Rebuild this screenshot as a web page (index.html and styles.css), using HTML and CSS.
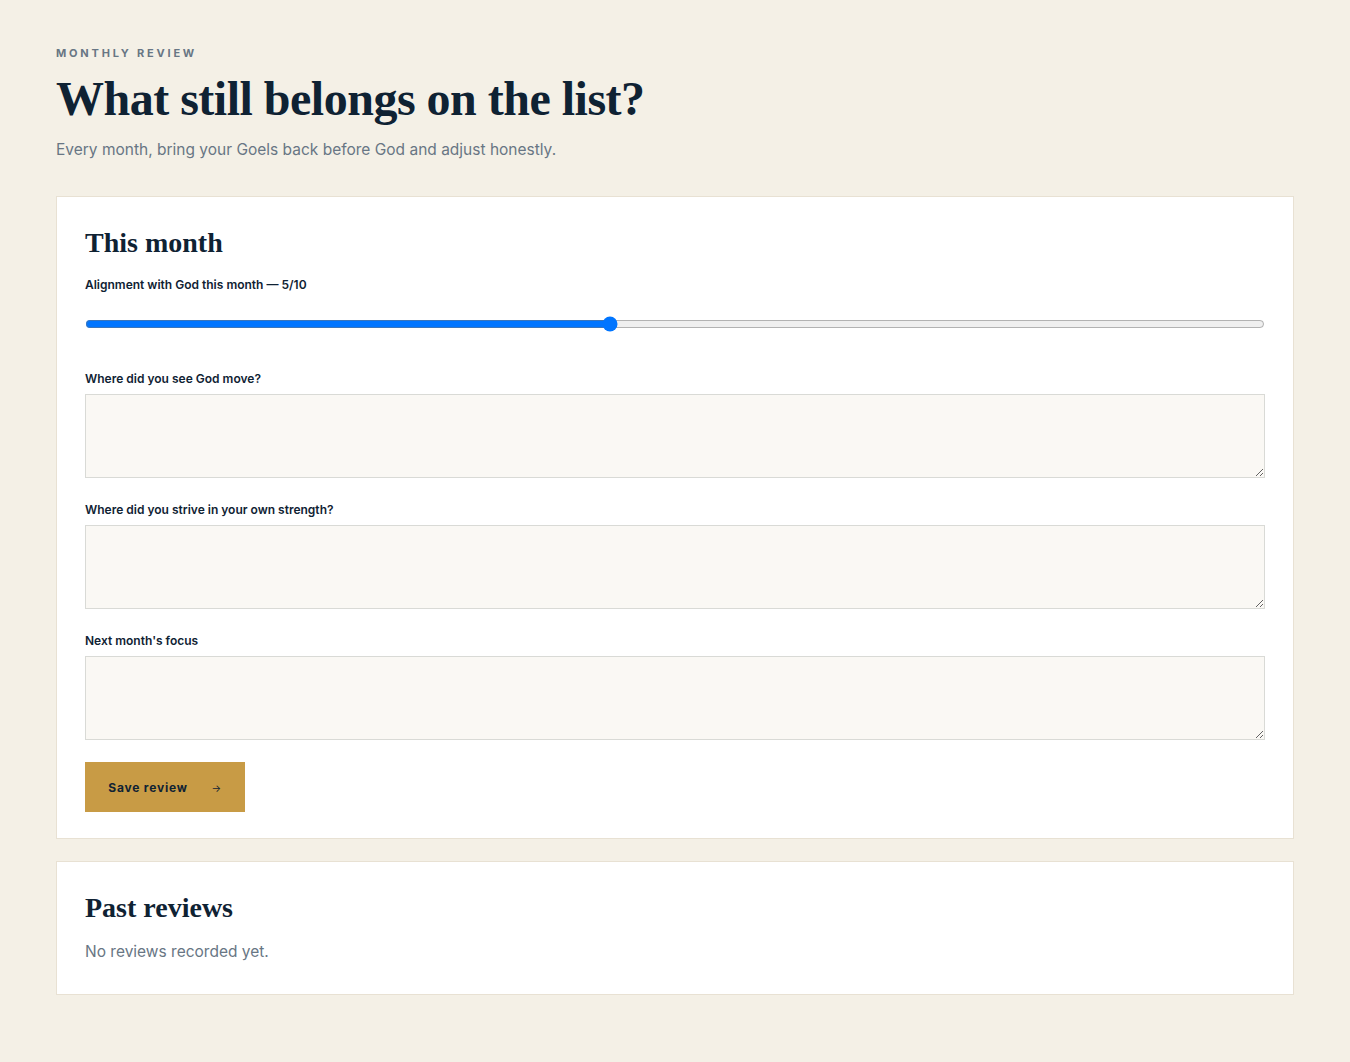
FILE: index.html
```html
<!DOCTYPE html>
<html lang="en">

<head>
    <meta charset="UTF-8">
    <meta name="viewport" content="width=device-width, initial-scale=1.0">
    <title>Monthly Review</title>
    <link rel="stylesheet" href="styles.css">
</head>

<body>
    <main class="page">
        <header class="page-head">
            <p class="eyebrow">Monthly review</p>
            <h1>What still belongs on the list?</h1>
            <p class="lede">Every month, bring your Goels back before God and adjust honestly.</p>
        </header>

        <section class="card">
            <h2>This month</h2>
            <form class="review-form" id="reviewForm">
                <div class="field">
                    <label for="alignment" id="alignmentLabel">Alignment with God this month — 5/10</label>
                    <input type="range" id="alignment" name="alignment" min="1" max="10" value="5" class="slider">
                </div>

                <div class="field">
                    <label for="godMove">Where did you see God move?</label>
                    <textarea id="godMove" name="godMove"></textarea>
                </div>

                <div class="field">
                    <label for="ownStrength">Where did you strive in your own strength?</label>
                    <textarea id="ownStrength" name="ownStrength"></textarea>
                </div>

                <div class="field">
                    <label for="nextFocus">Next month's focus</label>
                    <textarea id="nextFocus" name="nextFocus"></textarea>
                </div>

                <div>
                    <button type="submit" class="save-btn">Save review <span class="arrow">→</span></button>
                </div>
            </form>
        </section>

        <section class="card card-past">
            <h2>Past reviews</h2>
            <p class="empty">No reviews recorded yet.</p>
        </section>
    </main>

    <script>
        const slider = document.getElementById('alignment');
        slider.addEventListener('input', () => {
            document.getElementById('alignmentLabel').textContent = `Alignment with God this month — ${slider.value}/10`;
        });
        document.getElementById('reviewForm').addEventListener('submit', (e) => {
            e.preventDefault();
        });
    </script>
</body>

</html>
```

FILE: styles.css
```css
body {
    font-family: "Inter", "Open Sans", sans-serif;
    margin: 0;
    padding: 0;
    background-color: #f4f0e6;
    color: #0f2233;
}

.page {
    padding: 45px 56px 40px;
}

.page-head {
    margin-bottom: 34px;
}

.eyebrow {
    margin: 0;
    font-size: 11px;
    font-weight: 700;
    letter-spacing: 2.8px;
    text-transform: uppercase;
    color: #687684;
    line-height: 16px;
}

h1 {
    font-family: "Liberation Serif", "DejaVu Serif", serif;
    font-size: 48px;
    font-weight: 700;
    line-height: 56px;
    margin: 10px 0 11px;
    color: #0f2233;
    letter-spacing: -0.5px;
}

.lede {
    margin: 0;
    font-size: 15.5px;
    color: #687684;
    line-height: 24px;
}

.card {
    background-color: #fff;
    border: 1px solid #e8e1d3;
    padding: 28px 28px 26px;
    margin-bottom: 22px;
}

.card-past {
    padding-bottom: 33px;
}

h2 {
    font-family: "Liberation Serif", "DejaVu Serif", serif;
    font-size: 28px;
    font-weight: 700;
    line-height: 36px;
    margin: 0 0 16px;
    color: #0f2233;
}

.review-form {
    display: flex;
    flex-direction: column;
    gap: 24px;
}

.field {
    display: flex;
    flex-direction: column;
    gap: 7px;
}

.field label {
    font-size: 12px;
    font-weight: 600;
    line-height: 16px;
}

.slider {
    width: 100%;
    margin: 16px 0 15px;
}

textarea {
    height: 84px;
    box-sizing: border-box;
    background-color: #faf8f4;
    border: 1px solid #d9dad6;
    padding: 10px;
    font-family: inherit;
    font-size: 14px;
}

.save-btn {
    background-color: #c89b45;
    color: #0f2233;
    border: none;
    width: 160px;
    height: 50px;
    margin-top: -2px;
    font-family: inherit;
    font-size: 12px;
    font-weight: 700;
    letter-spacing: 0.8px;
    cursor: pointer;
}

.arrow {
    margin-left: 20px;
    font-size: 10px;
    font-weight: 400;
}

.empty {
    margin: 5px 0 0;
    font-size: 15.5px;
    color: #687684;
}
```
